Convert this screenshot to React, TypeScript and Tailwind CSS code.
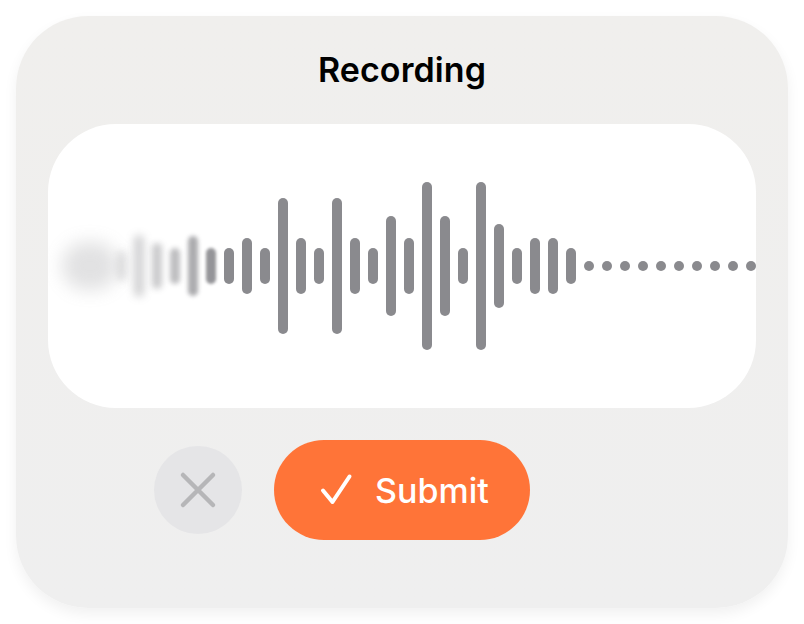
const bars = [
  { w: 'w-[56px]', h: 'h-[48px]', fx: 'blur-[9px] opacity-25 -mr-[8px]' },
  { w: 'w-[8px]', h: 'h-[30px]', fx: 'blur-[4px] opacity-30' },
  { w: 'w-[10px]', h: 'h-[62px]', fx: 'blur-[4px] opacity-40' },
  { w: 'w-[10px]', h: 'h-[46px]', fx: 'blur-[3px] opacity-45' },
  { w: 'w-[10px]', h: 'h-[36px]', fx: 'blur-[2.5px] opacity-55' },
  { w: 'w-[10px]', h: 'h-[60px]', fx: 'blur-[2px] opacity-70' },
  { w: 'w-[10px]', h: 'h-[36px]', fx: 'blur-[1.5px] opacity-90' },
  { w: 'w-[10px]', h: 'h-[36px]', fx: 'blur-[0.5px]' },
  { w: 'w-[10px]', h: 'h-[56px]', fx: '' },
  { w: 'w-[10px]', h: 'h-[36px]', fx: '' },
  { w: 'w-[10px]', h: 'h-[136px]', fx: '' },
  { w: 'w-[10px]', h: 'h-[56px]', fx: '' },
  { w: 'w-[10px]', h: 'h-[36px]', fx: '' },
  { w: 'w-[10px]', h: 'h-[136px]', fx: '' },
  { w: 'w-[10px]', h: 'h-[56px]', fx: '' },
  { w: 'w-[10px]', h: 'h-[36px]', fx: '' },
  { w: 'w-[10px]', h: 'h-[100px]', fx: '' },
  { w: 'w-[10px]', h: 'h-[56px]', fx: '' },
  { w: 'w-[10px]', h: 'h-[168px]', fx: '' },
  { w: 'w-[10px]', h: 'h-[100px]', fx: '' },
  { w: 'w-[10px]', h: 'h-[36px]', fx: '' },
  { w: 'w-[10px]', h: 'h-[168px]', fx: '' },
  { w: 'w-[10px]', h: 'h-[84px]', fx: '' },
  { w: 'w-[10px]', h: 'h-[36px]', fx: '' },
  { w: 'w-[10px]', h: 'h-[56px]', fx: '' },
  { w: 'w-[10px]', h: 'h-[56px]', fx: '' },
  { w: 'w-[10px]', h: 'h-[36px]', fx: '' },
  { w: 'w-[10px]', h: 'h-[10px]', fx: '' },
  { w: 'w-[10px]', h: 'h-[10px]', fx: '' },
  { w: 'w-[10px]', h: 'h-[10px]', fx: '' },
  { w: 'w-[10px]', h: 'h-[10px]', fx: '' },
  { w: 'w-[10px]', h: 'h-[10px]', fx: '' },
  { w: 'w-[10px]', h: 'h-[10px]', fx: '' },
  { w: 'w-[10px]', h: 'h-[10px]', fx: '' },
  { w: 'w-[10px]', h: 'h-[10px]', fx: '' },
  { w: 'w-[10px]', h: 'h-[10px]', fx: '' },
  { w: 'w-[10px]', h: 'h-[10px]', fx: '' },
];

export default function App() {
  return (
    <div className="w-[804px] h-[624px] bg-white p-4 overflow-hidden font-['Inter',sans-serif]">
      <div className="w-[772px] h-[592px] rounded-[72px] bg-gradient-to-b from-[#f0efed] to-[#efefef] shadow-[0_6px_14px_rgba(0,0,0,0.06)] px-8 flex flex-col">
        <h1 className="h-[108px] pb-[1px] flex items-center justify-center text-[34px] font-semibold text-black tracking-[0.1px]">
          Recording
        </h1>

        <div className="h-[284px] rounded-[68px] bg-white flex items-center gap-2 pl-[14px] overflow-hidden">
          {bars.map((bar, i) => (
            <div key={i} className={`shrink-0 rounded-full bg-[#8a8a8e] ${bar.w} ${bar.h} ${bar.fx}`} />
          ))}
        </div>

        <div className="mt-8 pl-[106px] flex items-center gap-8">
          <button className="w-[88px] h-[88px] rounded-full bg-[#e5e5e7] flex items-center justify-center">
            <svg width="40" height="40" viewBox="0 0 40 40" fill="none" stroke="#b6b6b8" strokeWidth="4.5" strokeLinecap="round">
              <path d="M5 5 L35 35 M35 5 L5 35" />
            </svg>
          </button>
          <button className="w-[256px] h-[100px] rounded-full bg-[#ff7438] flex items-center pl-[46px] gap-[21px] text-white text-[34px] font-medium">
            <svg width="34" height="34" viewBox="0 0 34 34" fill="none" stroke="white" strokeWidth="4" strokeLinecap="round" strokeLinejoin="round">
              <path d="M3 17.5 L12.5 29 L29.5 3.5" />
            </svg>
            <span>Submit</span>
          </button>
        </div>
      </div>
    </div>
  );
}
